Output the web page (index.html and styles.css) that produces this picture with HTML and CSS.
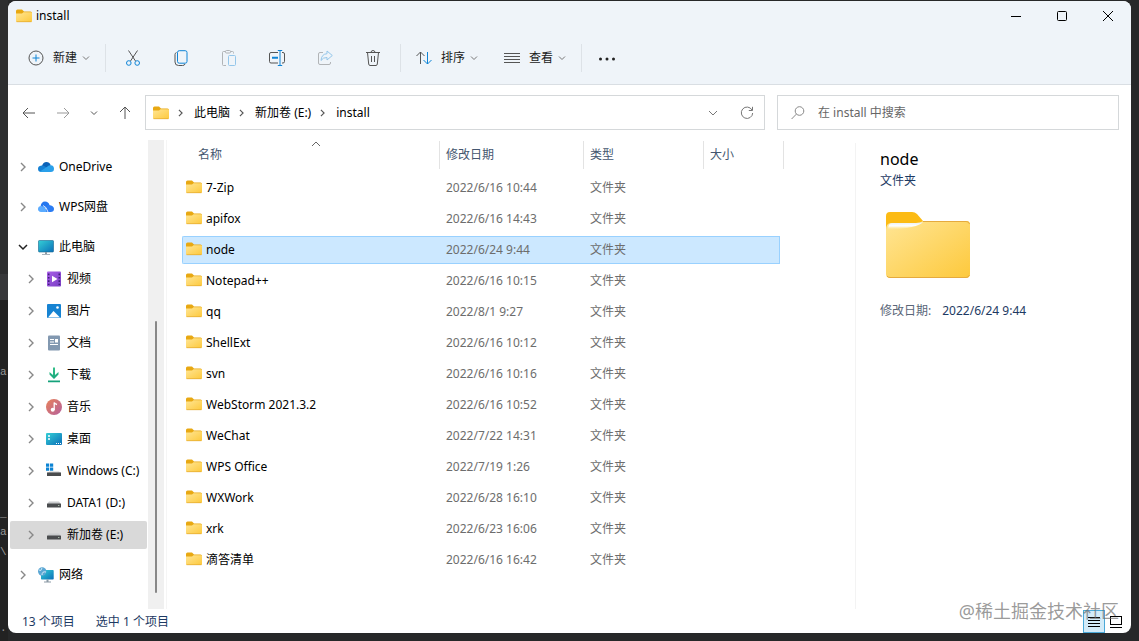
FILE: index.html
```html
<!DOCTYPE html>
<html lang="zh-CN">

<head>
    <meta charset="UTF-8">
    <title>install</title>
    <link rel="stylesheet" href="styles.css">
</head>

<body>
    <svg class="sprite" aria-hidden="true">
        <defs>
            <linearGradient id="gFolder" x1="0" y1="0" x2="1" y2="1">
                <stop offset="0" stop-color="#ffe594" />
                <stop offset="1" stop-color="#fdc93c" />
            </linearGradient>
            <linearGradient id="gSheen" x1="0" y1="0" x2="0" y2="1">
                <stop offset="0" stop-color="#e6eef2" />
                <stop offset="0.5" stop-color="#fff" />
                <stop offset="1" stop-color="#ffe594" stop-opacity="0" />
            </linearGradient>
            <linearGradient id="gScreen" x1="0" y1="0" x2="1" y2="1">
                <stop offset="0" stop-color="#34cfd6" />
                <stop offset="1" stop-color="#0b6fb8" />
            </linearGradient>
            <linearGradient id="gVideo" x1="0" y1="0" x2="1" y2="1">
                <stop offset="0" stop-color="#a95fe8" />
                <stop offset="1" stop-color="#7a3fc4" />
            </linearGradient>
            <linearGradient id="gMusic" x1="0" y1="0" x2="1" y2="1">
                <stop offset="0" stop-color="#e8825a" />
                <stop offset="1" stop-color="#b5609c" />
            </linearGradient>
            <linearGradient id="gDown" x1="0" y1="0" x2="0" y2="1">
                <stop offset="0" stop-color="#35c08a" />
                <stop offset="1" stop-color="#12a07a" />
            </linearGradient>
        </defs>
        <symbol id="folder" viewBox="0 0 16 14">
            <path d="M0 2Q0 .5 1.500.5H6L8 2.500H14.500Q16 2.500 16 4V7H0z" fill="#e8a812" />
            <path d="M0 4.500H6L7.500 3.300H15Q16 3.300 16 4.300V12Q16 13 15 13H1Q0 13 0 12z" fill="url(#gFolder)" />
            <path d="M.5 12.700H15.500" stroke="#e3a92f" stroke-width=".7" />
        </symbol>
        <symbol id="down" viewBox="0 0 8 8">
            <path d="M1 2.500 4 5.500 7 2.500" fill="none" stroke="currentColor" />
        </symbol>
        <symbol id="right" viewBox="0 0 8 10">
            <path d="M2 1 6 5 2 9" fill="none" stroke="currentColor" stroke-width="1.400" />
        </symbol>
        <symbol id="drive" viewBox="0 0 16 16">
            <path d="M3 6.500H13L15 9H1z" fill="#c9cbcd" />
            <rect x="1" y="8.500" width="14" height="4" rx=".6" fill="#4a4c4e" />
            <circle cx="12.800" cy="10.500" r=".6" fill="#d8f5d8" />
        </symbol>
    </svg>

    <!-- editor behind the window -->
    <div class="backdrop" aria-hidden="true">
        <span class="code code-1">a</span>
        <span class="code code-2">_</span>
        <span class="code code-3">a</span>
        <span class="code code-4">\</span>
        <span class="code code-5">.</span>
    </div>

    <div class="window">
        <header class="top">
            <div class="titlebar">
                <svg class="icon-folder"><use href="#folder" /></svg>
                <span class="title">install</span>
                <div class="controls">
                    <button type="button" aria-label="最小化"><svg width="12" height="12"><path d="M1 6.500H11" /></svg></button>
                    <button type="button" aria-label="最大化"><svg width="12" height="12"><rect x="1.500" y="1.500" width="9" height="9" rx="1" /></svg></button>
                    <button type="button" aria-label="关闭"><svg width="12" height="12"><path d="M1 1 11 11M11 1 1 11" /></svg></button>
                </div>
            </div>
            <div class="toolbar">
                <button type="button" class="menu">
                    <svg class="icon" viewBox="0 0 16 16"><circle cx="8" cy="8" r="7" /><path class="blue" d="M8 4.500V11.500M4.500 8H11.500" /></svg>
                    <span>新建</span>
                    <svg class="caret"><use href="#down" /></svg>
                </button>
                <span class="sep"></span>
                <button type="button" class="tool" aria-label="剪切">
                    <svg class="icon" viewBox="0 0 16 16"><path d="M3.500.5 10.500 11M12.500.5 5.500 11" /><circle class="blue" cx="3.800" cy="13" r="2.300" /><circle class="blue" cx="12.200" cy="13" r="2.300" /></svg>
                </button>
                <button type="button" class="tool" aria-label="复制">
                    <svg class="icon" viewBox="0 0 16 16"><path d="M3.500 2.500Q2 3 2 4.500V12Q2 15.500 5.500 15.500H9.500Q11.500 15.500 12 14" /><rect class="blue" x="4.500" y=".7" width="9.500" height="12.500" rx="1.800" /></svg>
                </button>
                <button type="button" class="tool" aria-label="粘贴" disabled>
                    <svg class="icon" viewBox="0 0 16 16"><path d="M5 15.500H2.500Q1.500 15.500 1.500 14.500V2.500Q1.500 1.500 2.500 1.500H4.500M9.500 1.500H11.500Q12.500 1.500 12.500 2.500V3.500" /><rect x="4.500" y=".5" width="5" height="2.500" rx="1" /><rect class="blue" x="7.500" y="5.500" width="7" height="10" rx="1" /></svg>
                </button>
                <button type="button" class="tool" aria-label="重命名">
                    <svg class="icon" viewBox="0 0 16 16"><path d="M9 2.500H2Q.5 2.500.5 4V11.500Q.5 13 2 13H9M13 2.500H14Q15.500 2.500 15.500 4V11.500Q15.500 13 14 13H13" /><path class="blue" d="M11 .5V15.500M8.800.5H13.200M8.800 15.500H13.200" /><path class="blue thick" d="M3 7.800H9" /></svg>
                </button>
                <button type="button" class="tool" aria-label="共享" disabled>
                    <svg class="icon" viewBox="0 0 16 16"><path d="M6 2.500H3Q1.500 2.500 1.500 4V13Q1.500 14.500 3 14.500H12Q13.500 14.500 13.500 13V12" /><path class="blue" d="M10 1 15.300 5.500 10 10V7.500Q6 7.300 4 10.500 4.500 4 10 3.700z" /></svg>
                </button>
                <button type="button" class="tool" aria-label="删除">
                    <svg class="icon" viewBox="0 0 16 16"><path d="M1 2.500H15M6 2.500Q6 .5 8 .5T10 2.500M2.500 2.500 3.700 14Q3.900 15.500 5 15.500H11Q12.100 15.500 12.300 14L13.500 2.500M6.500 6V12M9.500 6V12" /></svg>
                </button>
                <span class="sep"></span>
                <button type="button" class="menu">
                    <svg class="icon" viewBox="0 0 16 16"><path d="M4.500 14V2M.5 6 4.500 2 8.500 6" /><path class="blue" d="M11.500 2V14M7.500 10 11.500 14 15.500 10" /></svg>
                    <span>排序</span>
                    <svg class="caret"><use href="#down" /></svg>
                </button>
                <button type="button" class="menu">
                    <svg class="icon" viewBox="0 0 16 16"><path d="M0 3.500H16M0 6.500H16M0 9.500H16M0 12.500H16" /></svg>
                    <span>查看</span>
                    <svg class="caret"><use href="#down" /></svg>
                </button>
                <span class="sep"></span>
                <button type="button" class="tool more" aria-label="更多">
                    <svg class="icon dots" viewBox="0 0 16 16"><circle cx="1.500" cy="9" r="1.500" /><circle cx="8" cy="9" r="1.500" /><circle cx="14.500" cy="9" r="1.500" /></svg>
                </button>
            </div>
        </header>

        <div class="navbar">
            <div class="history">
                <button type="button" aria-label="后退"><svg class="arrow" viewBox="0 0 14 14"><path d="M13 7H1M6 2 1 7 6 12" /></svg></button>
                <button type="button" class="faded" aria-label="前进"><svg class="arrow" viewBox="0 0 14 14"><path d="M1 7H13M8 2 13 7 8 12" /></svg></button>
                <button type="button" class="narrow" aria-label="最近"><svg class="caret"><use href="#down" /></svg></button>
                <button type="button" aria-label="向上"><svg class="arrow" viewBox="0 0 14 14"><path d="M7 13V1M2 6 7 1 12 6" /></svg></button>
            </div>
            <nav class="address">
                <svg class="icon-folder"><use href="#folder" /></svg>
                <svg class="crumb-arrow"><use href="#right" /></svg>
                <a href="#">此电脑</a>
                <svg class="crumb-arrow"><use href="#right" /></svg>
                <a href="#">新加卷 (E:)</a>
                <svg class="crumb-arrow"><use href="#right" /></svg>
                <a href="#">install</a>
                <button type="button" class="push" aria-label="历史记录"><svg width="10" height="10" viewBox="0 0 10 10"><path d="M1 3 5 7 9 3" /></svg></button>
                <button type="button" aria-label="刷新"><svg width="14" height="14" viewBox="0 0 14 14"><path d="M12 4A5.700 5.700 0 1 0 12.700 7M12.500.8V4.500H8.800" /></svg></button>
            </nav>
            <label class="search">
                <svg width="14" height="14" viewBox="0 0 14 14"><circle cx="8.500" cy="5" r="4.300" /><path d="M5.400 8.100.6 13" /></svg>
                <input type="text" placeholder="在 install 中搜索" aria-label="在 install 中搜索">
            </label>
        </div>

        <main class="content">
            <nav class="tree">
                <a class="node" href="#">
                    <svg class="expand"><use href="#right" /></svg>
                    <svg class="icon" viewBox="0 0 16 16"><path d="M4 7Q5 3 8.500 3 11.500 3 12.700 6.200L8 10z" fill="#0a62b8" /><path d="M3.500 13Q0 13 0 9.800 0 7 3.500 6.500 5 6 7 7.500L13 11 9 13z" fill="#1580d4" /><path d="M2 12.500 9.500 7.500Q11 6 12.800 6.200 16 6.500 16 9.800 16 13 12.800 13H3.500z" fill="#2aa0ea" /></svg>
                    <span>OneDrive</span>
                </a>
                <a class="node" href="#">
                    <svg class="expand"><use href="#right" /></svg>
                    <svg class="icon" viewBox="0 0 16 16"><path d="M2.500 8Q3 2.500 7 2.500 10.500 2.500 11.500 6L8 9z" fill="#2476ef" /><path d="M3 13Q0 12.500 0 10 0 7 3.500 7 6 7 7.500 9.500L9.500 13z" fill="#5aabff" /><path d="M8.500 13Q7 8.500 9 7 10.500 5.500 13 6.500 16 7.500 16 10 16 13 12.500 13z" fill="#2b7cf3" /><path d="M5 6.500Q8.500 7.500 10 13" stroke="#fff" stroke-width=".8" fill="none" /></svg>
                    <span>WPS网盘</span>
                </a>
                <a class="node open" href="#">
                    <svg class="expand" viewBox="0 0 10 8"><path d="M1 2 5 6 9 2" /></svg>
                    <svg class="icon" viewBox="0 0 16 16"><rect x=".5" y="1.500" width="15" height="11.500" rx=".8" fill="url(#gScreen)" stroke="#15658e" stroke-width=".6" /><path d="M7 13H9V15H12V15.800H4V15H7z" fill="#8c9aa5" /></svg>
                    <span>此电脑</span>
                </a>
                <a class="node child" href="#">
                    <svg class="expand"><use href="#right" /></svg>
                    <svg class="icon" viewBox="0 0 16 16"><rect x="1" y=".5" width="14" height="15" rx="1" fill="url(#gVideo)" /><path d="M2.700 2.500V14M13.300 2.500V14" stroke="#3e1e78" stroke-width="1.600" stroke-dasharray="1.700 1.700" /><path d="M6 4.800 11.500 8 6 11.200z" fill="#fff" /></svg>
                    <span>视频</span>
                </a>
                <a class="node child" href="#">
                    <svg class="expand"><use href="#right" /></svg>
                    <svg class="icon" viewBox="0 0 16 16"><rect x="1" y="1" width="14" height="14" rx="1" fill="#1683d2" /><path d="M2 14.500 7.500 8 14 14.500z" fill="#fff" /><circle cx="11.500" cy="4.500" r="1.300" fill="#fff" /></svg>
                    <span>图片</span>
                </a>
                <a class="node child" href="#">
                    <svg class="expand"><use href="#right" /></svg>
                    <svg class="icon" viewBox="0 0 16 16"><rect x="2" y=".5" width="12" height="15" rx="1" fill="#8298b0" /><path d="M4 4.500H8M4 7H8M4 9.500H12" stroke="#fff" stroke-width="1.200" /><rect x="9" y="4" width="3" height="3.500" fill="#fff" /></svg>
                    <span>文档</span>
                </a>
                <a class="node child" href="#">
                    <svg class="expand"><use href="#right" /></svg>
                    <svg class="icon" viewBox="0 0 16 16"><path d="M7 .5H9V8L12.500 5V7.500L8 12 3.500 7.500V5L7 8zM2 13.500H14V15.300H2z" fill="url(#gDown)" /></svg>
                    <span>下载</span>
                </a>
                <a class="node child" href="#">
                    <svg class="expand"><use href="#right" /></svg>
                    <svg class="icon" viewBox="0 0 16 16"><circle cx="8" cy="8" r="8" fill="url(#gMusic)" /><circle cx="6.700" cy="10.800" r="2" fill="#fff" /><path d="M8.200 11V3.500Q9 5 11 5.500" stroke="#fff" stroke-width="1.300" fill="none" /></svg>
                    <span>音乐</span>
                </a>
                <a class="node child" href="#">
                    <svg class="expand"><use href="#right" /></svg>
                    <svg class="icon" viewBox="0 0 16 16"><rect y="2" width="16" height="12" rx="1" fill="url(#gScreen)" /><path d="M2 5H4M2 8H4" stroke="#fff" stroke-width="1.500" /><path d="M10 12.500H15" stroke="#fff" stroke-dasharray="1 1" /></svg>
                    <span>桌面</span>
                </a>
                <a class="node child" href="#">
                    <svg class="expand"><use href="#right" /></svg>
                    <svg class="icon" viewBox="0 0 16 16"><path d="M4 8.500H13L15 10H1z" fill="#c9cbcd" /><rect x="1" y="9.500" width="14" height="3.500" fill="#4a4c4e" /><path d="M0 .5H3.200V3.700H0zM4 .5H7.200V3.700H4zM0 4.500H3.200V7.700H0zM4 4.500H7.200V7.700H4z" fill="#0d84d4" /></svg>
                    <span>Windows (C:)</span>
                </a>
                <a class="node child" href="#">
                    <svg class="expand"><use href="#right" /></svg>
                    <svg class="icon"><use href="#drive" /></svg>
                    <span>DATA1 (D:)</span>
                </a>
                <a class="node child current" href="#">
                    <svg class="expand"><use href="#right" /></svg>
                    <svg class="icon"><use href="#drive" /></svg>
                    <span>新加卷 (E:)</span>
                </a>
                <a class="node" href="#">
                    <svg class="expand"><use href="#right" /></svg>
                    <svg class="icon" viewBox="0 0 16 16"><rect x="3" y="3" width="12.700" height="9.500" rx=".8" fill="url(#gScreen)" /><path d="M8.500 12.500H10.500V14.500H13V15.500H6V14.500H8.500z" fill="#8c9aa5" /><circle cx="4.200" cy="4.500" r="4.200" fill="#5ba7d4" /><path d="M1 3Q3 5 4 1M4 8Q4 4 8 5" stroke="#d5edf7" fill="none" /></svg>
                    <span>网络</span>
                </a>
            </nav>
            <div class="scrollbar"><div class="thumb"></div></div>

            <section class="files">
                <table>
                    <thead>
                        <tr>
                            <th class="col-name"><div>名称<svg class="sort" viewBox="0 0 10 6"><path d="M1 5 5 1 9 5" /></svg></div></th>
                            <th class="col-date"><div>修改日期</div></th>
                            <th class="col-type"><div>类型</div></th>
                            <th class="col-size"><div>大小</div></th>
                        </tr>
                    </thead>
                    <tbody>
                        <tr><td><svg class="icon-folder"><use href="#folder" /></svg>7-Zip</td><td>2022/6/16 10:44</td><td>文件夹</td><td></td></tr>
                        <tr><td><svg class="icon-folder"><use href="#folder" /></svg>apifox</td><td>2022/6/16 14:43</td><td>文件夹</td><td></td></tr>
                        <tr class="selected"><td><svg class="icon-folder"><use href="#folder" /></svg>node</td><td>2022/6/24 9:44</td><td>文件夹</td><td></td></tr>
                        <tr><td><svg class="icon-folder"><use href="#folder" /></svg>Notepad++</td><td>2022/6/16 10:15</td><td>文件夹</td><td></td></tr>
                        <tr><td><svg class="icon-folder"><use href="#folder" /></svg>qq</td><td>2022/8/1 9:27</td><td>文件夹</td><td></td></tr>
                        <tr><td><svg class="icon-folder"><use href="#folder" /></svg>ShellExt</td><td>2022/6/16 10:12</td><td>文件夹</td><td></td></tr>
                        <tr><td><svg class="icon-folder"><use href="#folder" /></svg>svn</td><td>2022/6/16 10:16</td><td>文件夹</td><td></td></tr>
                        <tr><td><svg class="icon-folder"><use href="#folder" /></svg>WebStorm 2021.3.2</td><td>2022/6/16 10:52</td><td>文件夹</td><td></td></tr>
                        <tr><td><svg class="icon-folder"><use href="#folder" /></svg>WeChat</td><td>2022/7/22 14:31</td><td>文件夹</td><td></td></tr>
                        <tr><td><svg class="icon-folder"><use href="#folder" /></svg>WPS Office</td><td>2022/7/19 1:26</td><td>文件夹</td><td></td></tr>
                        <tr><td><svg class="icon-folder"><use href="#folder" /></svg>WXWork</td><td>2022/6/28 16:10</td><td>文件夹</td><td></td></tr>
                        <tr><td><svg class="icon-folder"><use href="#folder" /></svg>xrk</td><td>2022/6/23 16:06</td><td>文件夹</td><td></td></tr>
                        <tr><td><svg class="icon-folder"><use href="#folder" /></svg>滴答清单</td><td>2022/6/16 16:42</td><td>文件夹</td><td></td></tr>
                    </tbody>
                </table>
            </section>

            <aside class="details">
                <h2>node</h2>
                <p>文件夹</p>
                <svg class="preview" viewBox="0 0 84 66">
                    <path d="M0 4Q0 0 4 0H26Q29 0 31 2L37 9H80Q84 9 84 13V30H0z" fill="#fcbb14" />
                    <path d="M0 18Q0 11 5 11H30Q34 11 37 9H80Q84 9 84 13V62Q84 66 80 66H4Q0 66 0 62z" fill="url(#gFolder)" />
                    <path d="M2 18Q2 11 6 11H30Q34 11 37 10Q32 16 2 18z" fill="url(#gSheen)" />
                    <path d="M37 9.500H80Q83 9.500 83.500 12M1 64Q2 65.500 4 65.500H80Q82.500 65.500 83.500 63" fill="none" stroke="#e5aa3e" />
                </svg>
                <dl>
                    <dt>修改日期:</dt>
                    <dd>2022/6/24 9:44</dd>
                </dl>
            </aside>
        </main>

        <footer class="statusbar">
            <span>13 个项目</span>
            <span>选中 1 个项目</span>
            <div class="views">
                <button type="button" class="active" aria-label="详细信息"><svg width="12" height="12"><path d="M0 1.500H12M0 4.500H12M0 7.500H12M0 10.500H12" /></svg></button>
                <button type="button" aria-label="大图标"><svg width="12" height="12"><rect x=".5" y=".5" width="11" height="8" /><path d="M0 11.500H12" /></svg></button>
            </div>
        </footer>
        <div class="watermark">@稀土掘金技术社区</div>
    </div>
</body>

</html>
```
FILE: styles.css
```css
* {
    box-sizing: border-box;
}

body {
    margin: 0;
    padding: 1px 8px 8px;
    height: 100vh;
    background-color: #272829;
    font-family: "Noto Sans", "Noto Sans CJK SC", sans-serif;
    font-size: 12px;
    line-height: 16px;
    color: #000;
}

button {
    display: flex;
    align-items: center;
    justify-content: center;
    padding: 0;
    border: none;
    background: none;
    font: inherit;
    color: inherit;
}

a {
    color: inherit;
    text-decoration: none;
}

svg {
    display: block;
    flex: none;
}

button svg,
.search svg {
    fill: none;
    stroke: currentColor;
}

.sprite {
    position: absolute;
    width: 0;
    height: 0;
}

.icon {
    width: 16px;
    height: 16px;
}

.icon-folder {
    width: 16px;
    height: 14px;
}

.caret {
    width: 8px;
    height: 8px;
    color: #777;
}

/* backdrop */
.backdrop {
    position: absolute;
    top: 0;
    left: 0;
    width: 8px;
    height: 100%;
    background: linear-gradient(#2d2e2f 0 274px, #37383a 274px 300px, #222 300px);
}

.code {
    position: absolute;
    left: 0;
    font-family: "Liberation Mono", monospace;
    font-size: 11px;
    color: #999;
}

.code-1 {
    top: 364px;
}

.code-2 {
    top: 506px;
}

.code-3 {
    top: 524px;
}

.code-4 {
    top: 544px;
}

.code-5 {
    top: 620px;
}

.window {
    position: relative;
    display: flex;
    flex-direction: column;
    height: 100%;
    background-color: #fff;
    border-radius: 8px;
    overflow: hidden;
}

/* title + commands */
.top {
    background-color: #eff4f9;
    border-bottom: 1px solid #d9dee3;
}

.titlebar {
    display: flex;
    align-items: center;
    height: 29px;
    padding-left: 8px;
    gap: 4px;
}

.controls {
    display: flex;
    margin-left: auto;
}

.controls button {
    width: 46px;
    height: 29px;
}

.toolbar {
    display: flex;
    align-items: center;
    height: 54px;
    padding: 2px 0 0 8px;
    color: #1a1a1a;
}

.toolbar .icon {
    color: #555;
}

.toolbar .blue {
    stroke: #0f84d6;
}

.toolbar .thick {
    stroke-width: 2;
}

.toolbar button:disabled {
    opacity: 0.4;
}

.menu {
    height: 32px;
    padding: 0 12px;
}

.menu + .menu {
    margin-left: 2px;
}

.menu span {
    margin: 0 5px 0 9px;
}

.tool {
    width: 48px;
    height: 32px;
}

.tool.more {
    width: 44px;
}

.toolbar .dots {
    fill: #222;
    stroke: none;
}

.sep {
    width: 1px;
    height: 28px;
    margin: 0 3px;
    background-color: #dde2e7;
}

/* navigation */
.navbar {
    display: flex;
    align-items: center;
    height: 55px;
    padding-right: 12px;
}

.history {
    display: flex;
    width: 137px;
    padding-left: 4px;
    color: #555;
}

.history button {
    width: 34px;
    height: 32px;
}

.history .narrow {
    width: 28px;
}

.history .caret {
    color: #555;
}

.history .faded {
    color: #999;
}

.arrow {
    width: 14px;
    height: 14px;
}

.address {
    display: flex;
    flex: 1;
    align-items: center;
    height: 35px;
    padding-left: 7px;
    border: 1px solid #d5d8da;
}

.crumb-arrow {
    width: 7px;
    height: 8px;
    margin: 0 10px 0 8px;
    color: #555;
}

.address button {
    width: 34px;
    height: 33px;
    color: #777;
}

.address .push {
    margin-left: auto;
}

.search {
    display: flex;
    align-items: center;
    flex: 0 1 342px;
    height: 35px;
    margin-left: 12px;
    padding: 0 13px;
    gap: 13px;
    border: 1px solid #d5d8da;
    color: #888;
}

.search input {
    flex: 1;
    min-width: 0;
    padding: 0;
    border: none;
    outline: none;
    background: none;
    font: inherit;
}

.search input::placeholder {
    color: #666;
    opacity: 1;
}

/* body */
.content {
    display: flex;
    flex: 1;
    min-height: 0;
}

.tree {
    display: flex;
    flex-direction: column;
    width: 140px;
    padding: 13px 1px 0 2px;
    overflow: hidden;
}

.node {
    display: flex;
    align-items: center;
    flex: none;
    height: 28px;
    margin-bottom: 12px;
    padding-left: 8px;
    white-space: nowrap;
}

.node.open,
.node.child {
    margin-bottom: 4px;
}

.node.child {
    padding-left: 16px;
}

.node.current {
    margin-bottom: 12px;
    background-color: #d9d9d9;
    border-radius: 2px;
}

.node .icon {
    margin: 0 5px 0 10px;
}

.expand {
    width: 10px;
    height: 10px;
    color: #888;
}

.open .expand path {
    fill: none;
    stroke: #222;
    stroke-width: 1.5;
}

.scrollbar {
    display: flex;
    align-items: flex-end;
    justify-content: center;
    width: 16px;
    padding-bottom: 16px;
    background-color: #f0f0f0;
}

.thumb {
    width: 2px;
    height: 60%;
    background-color: #888;
    border-radius: 1px;
}

.files {
    flex: 1;
    min-width: 0;
    margin-left: 2px;
    padding-left: 15px;
    border-left: 1px solid #f5f5f5;
    overflow: hidden;
}

table {
    width: 602px;
    table-layout: fixed;
    border-collapse: separate;
    border-spacing: 0 3px;
    margin-top: -2px;
}

th {
    height: 30px;
    padding: 0;
    vertical-align: top;
    text-align: left;
    font-weight: normal;
    color: #44566f;
}

th div {
    position: relative;
    height: 28px;
    padding-left: 6px;
    line-height: 28px;
    border-right: 1px solid #e3e3e3;
}

.col-name {
    width: 258px;
}

.col-name div {
    padding-left: 16px;
}

.col-date {
    width: 144px;
}

.col-type {
    width: 120px;
}

.sort {
    position: absolute;
    top: 0;
    left: 50%;
    width: 10px;
    height: 6px;
    fill: none;
    stroke: #666;
}

td {
    height: 28px;
    padding: 0 0 0 6px;
    color: #6d6d6d;
}

td:first-child {
    padding-left: 4px;
    color: #000;
}

td .icon-folder {
    display: inline-block;
    margin-right: 4px;
    vertical-align: top;
}

.selected td {
    background-color: #cce8ff;
    background-clip: padding-box;
    border: solid #99d1ff;
    border-width: 1px 0;
}

.selected td:first-child {
    border-left-width: 1px;
    border-radius: 2px 0 0 2px;
    padding-left: 3px;
}

.selected td:last-child {
    border-width: 0 4px 0 0;
    border-color: transparent;
    box-shadow: inset -1px 0 #99d1ff, inset 0 1px #99d1ff, inset 0 -1px #99d1ff;
}

.details {
    width: 276px;
    margin-top: 3px;
    padding: 6px 24px 0;
    border-left: 1px solid #f3f3f3;
    color: #1d3a63;
}

.details h2 {
    margin: 0;
    font-size: 16px;
    line-height: 20px;
    font-weight: normal;
    color: #000;
}

.details p {
    margin: 4px 0 23px;
}

.preview {
    width: 84px;
    height: 66px;
    margin-left: 6px;
}

.details dl {
    display: flex;
    gap: 11px;
    margin: 25px 0 0;
}

.details dt {
    color: #5a6678;
}

.details dd {
    margin: 0;
}

.statusbar {
    display: flex;
    align-items: center;
    height: 24px;
    padding: 1px 4px 0 14px;
    gap: 21px;
    color: #1d3a63;
}

.views {
    display: flex;
    margin-left: auto;
    color: #000;
}

.views button {
    width: 22px;
    height: 23px;
    border: 1px solid transparent;
}

.views .active {
    background-color: #d3ebf8;
    border-color: #4ba9d8;
}

.watermark {
    position: absolute;
    right: 12px;
    bottom: 9px;
    font-size: 18px;
    line-height: 26px;
    color: rgba(110, 110, 110, 0.7);
    pointer-events: none;
}
```
